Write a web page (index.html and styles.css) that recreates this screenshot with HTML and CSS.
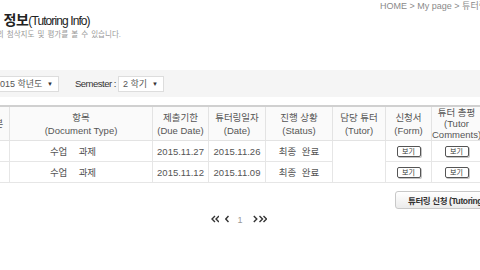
FILE: index.html
```html
<!DOCTYPE html>
<html lang="ko">
<head>
<meta charset="UTF-8">
<meta name="viewport" content="width=device-width, initial-scale=1.0">
<title>튜터링 정보</title>
<link rel="stylesheet" href="styles.css">
</head>
<body>
<div class="page">
    <div class="crumb">HOME &gt; My page &gt; 튜터링 정보</div>
    <h1 class="title">튜터링 정보<span>(Tutoring Info)</span></h1>
    <p class="desc">튜터의 첨삭지도 및 평가를 볼 수 있습니다.</p>

    <div class="filter">
        <span class="label year-label">Year :</span>
        <div class="select year">2015 학년도 <i>▼</i></div>
        <span class="label sem-label">Semester :</span>
        <div class="select sem">2 학기 <i>▼</i></div>
    </div>

    <table class="list">
        <colgroup>
            <col style="width:59px">
            <col style="width:143px">
            <col style="width:56px">
            <col style="width:57px">
            <col style="width:67px">
            <col style="width:53px">
            <col style="width:46px">
            <col style="width:50px">
            <col style="width:47px">
        </colgroup>
        <thead>
            <tr>
                <th>튜터링 구분</th>
                <th>항목<br>(Document Type)</th>
                <th>제출기한<br>(Due Date)</th>
                <th>튜터링일자<br>(Date)</th>
                <th>진행 상황<br>(Status)</th>
                <th>담당 튜터<br>(Tutor)</th>
                <th>신청서<br>(Form)</th>
                <th class="tight">튜터 총평<br>(Tutor<br>Comments)</th>
                <th>비고</th>
            </tr>
        </thead>
        <tbody>
            <tr>
                <td>학부 과정</td>
                <td class="type">수업&nbsp; 과제</td>
                <td>2015.11.27</td>
                <td>2015.11.26</td>
                <td>최종 완료</td>
                <td rowspan="2"></td>
                <td><span class="view">보기</span></td>
                <td><span class="view">보기</span></td>
                <td></td>
            </tr>
            <tr>
                <td>학부 과정</td>
                <td class="type">수업&nbsp; 과제</td>
                <td>2015.11.12</td>
                <td>2015.11.09</td>
                <td>최종 완료</td>
                <td><span class="view">보기</span></td>
                <td><span class="view">보기</span></td>
                <td></td>
            </tr>
        </tbody>
    </table>

    <div class="actions">
        <button class="apply">튜터링 신청 (Tutoring Apply)</button>
    </div>

    <div class="paging">
        <svg class="first" width="8" height="8" viewBox="0 0 8 8"><polyline points="4,1 1,4 4,7" /><polyline points="8,1 5,4 8,7" /></svg>
        <svg class="prev" width="4" height="8" viewBox="0 0 4 8"><polyline points="3.5,1 0.8,4 3.5,7" /></svg>
        <span class="num">1</span>
        <svg class="next" width="5" height="8" viewBox="0 0 5 8"><polyline points="0.8,1 3.8,4 0.8,7" /></svg>
        <svg class="last" width="8" height="8" viewBox="0 0 8 8"><polyline points="0.5,1 3.5,4 0.5,7" /><polyline points="4.5,1 7.5,4 4.5,7" /></svg>
    </div>
</div>
</body>
</html>
```

FILE: styles.css
```css
html, body {
    margin: 0;
    background: #fff;
    overflow: hidden;
    font-family: "Liberation Sans", "Noto Sans CJK KR", sans-serif;
    color: #555;
}
.page {
    width: 578px;
    margin-left: -50px;
}
.crumb {
    height: 12px;
    line-height: 12px;
    font-size: 9px;
    color: #8a8a8a;
    text-align: right;
    margin-right: 22px;
}
.title {
    margin: 0 0 0 13px;
    height: 16px;
    line-height: 16px;
    font-size: 14px;
    font-weight: bold;
    color: #222;
    letter-spacing: -0.5px;
}
.title span {
    font-size: 12px;
    font-weight: normal;
    letter-spacing: -0.9px;
}
.desc {
    margin: 2px 0 0 33px;
    height: 10px;
    line-height: 10px;
    font-size: 7.5px;
    color: #999;
    word-spacing: 1px;
}
.filter {
    margin-top: 30px;
    height: 27px;
    background: #f5f5f5;
    display: flex;
    align-items: center;
    padding-left: 13px;
}
.label {
    font-size: 9.5px;
    color: #333;
    letter-spacing: -0.5px;
    white-space: nowrap;
}
.year-label {
    width: 27px;
}
.sem-label {
    margin-left: 16px;
    margin-right: 2px;
}
.select {
    box-sizing: border-box;
    height: 16px;
    background: #fff;
    border: 1px solid #ddd;
    display: flex;
    align-items: center;
    justify-content: space-between;
    font-size: 9px;
    color: #555;
    padding: 0 5px 0 4px;
    white-space: nowrap;
}
.select i {
    font-style: normal;
    font-size: 6px;
    color: #333;
}
.year {
    width: 69px;
}
.sem {
    width: 46px;
}
.list {
    margin-top: 8px;
    width: 578px;
    border-collapse: collapse;
    table-layout: fixed;
    border-top: 2px solid #d0d0d0;
}
.list th {
    height: 31px;
    padding: 0;
    background: #fafafa;
    font-size: 9.5px;
    font-weight: normal;
    line-height: 13px;
    color: #555;
    border: 1px solid #e3e3e3;
    border-top: none;
    white-space: nowrap;
}
.list th.tight {
    line-height: 11px;
}
.list td {
    height: 20px;
    padding: 0;
    text-align: center;
    font-size: 9.5px;
    color: #555;
    border: 1px solid #e6e6e6;
    word-spacing: 3px;
    white-space: nowrap;
}
.list td.type {
    padding-right: 16px;
}
.view {
    display: inline-block;
    width: 22px;
    height: 9px;
    line-height: 9px;
    border: 1px solid #555;
    border-radius: 2px;
    font-size: 7px;
    color: #333;
    box-shadow: 1px 1px 0 #c4c4c4;
    word-spacing: 0;
    vertical-align: middle;
}
.actions {
    margin-top: 8px;
    display: flex;
    justify-content: flex-end;
}
.apply {
    box-sizing: border-box;
    width: 133px;
    height: 18px;
    padding: 0 0 0 12px;
    text-align: left;
    border: 1px solid #c8c8c8;
    border-radius: 3px;
    background: linear-gradient(#ffffff, #ebebeb);
    font-family: "Liberation Sans", "Noto Sans CJK KR", sans-serif;
    font-size: 8.5px;
    font-weight: bold;
    letter-spacing: -0.4px;
    color: #333;
}
.paging {
    margin-top: 4px;
    height: 12px;
    display: flex;
    justify-content: center;
    align-items: center;
}
.paging svg polyline {
    fill: none;
    stroke: #333;
    stroke-width: 1.4;
}
.first {
    margin-right: 6px;
}
.prev {
    margin-right: 8px;
}
.num {
    font-size: 9px;
    color: #999;
    margin-right: 10px;
    padding-top: 2px;
}
.next {
    margin-right: 1px;
}
```
